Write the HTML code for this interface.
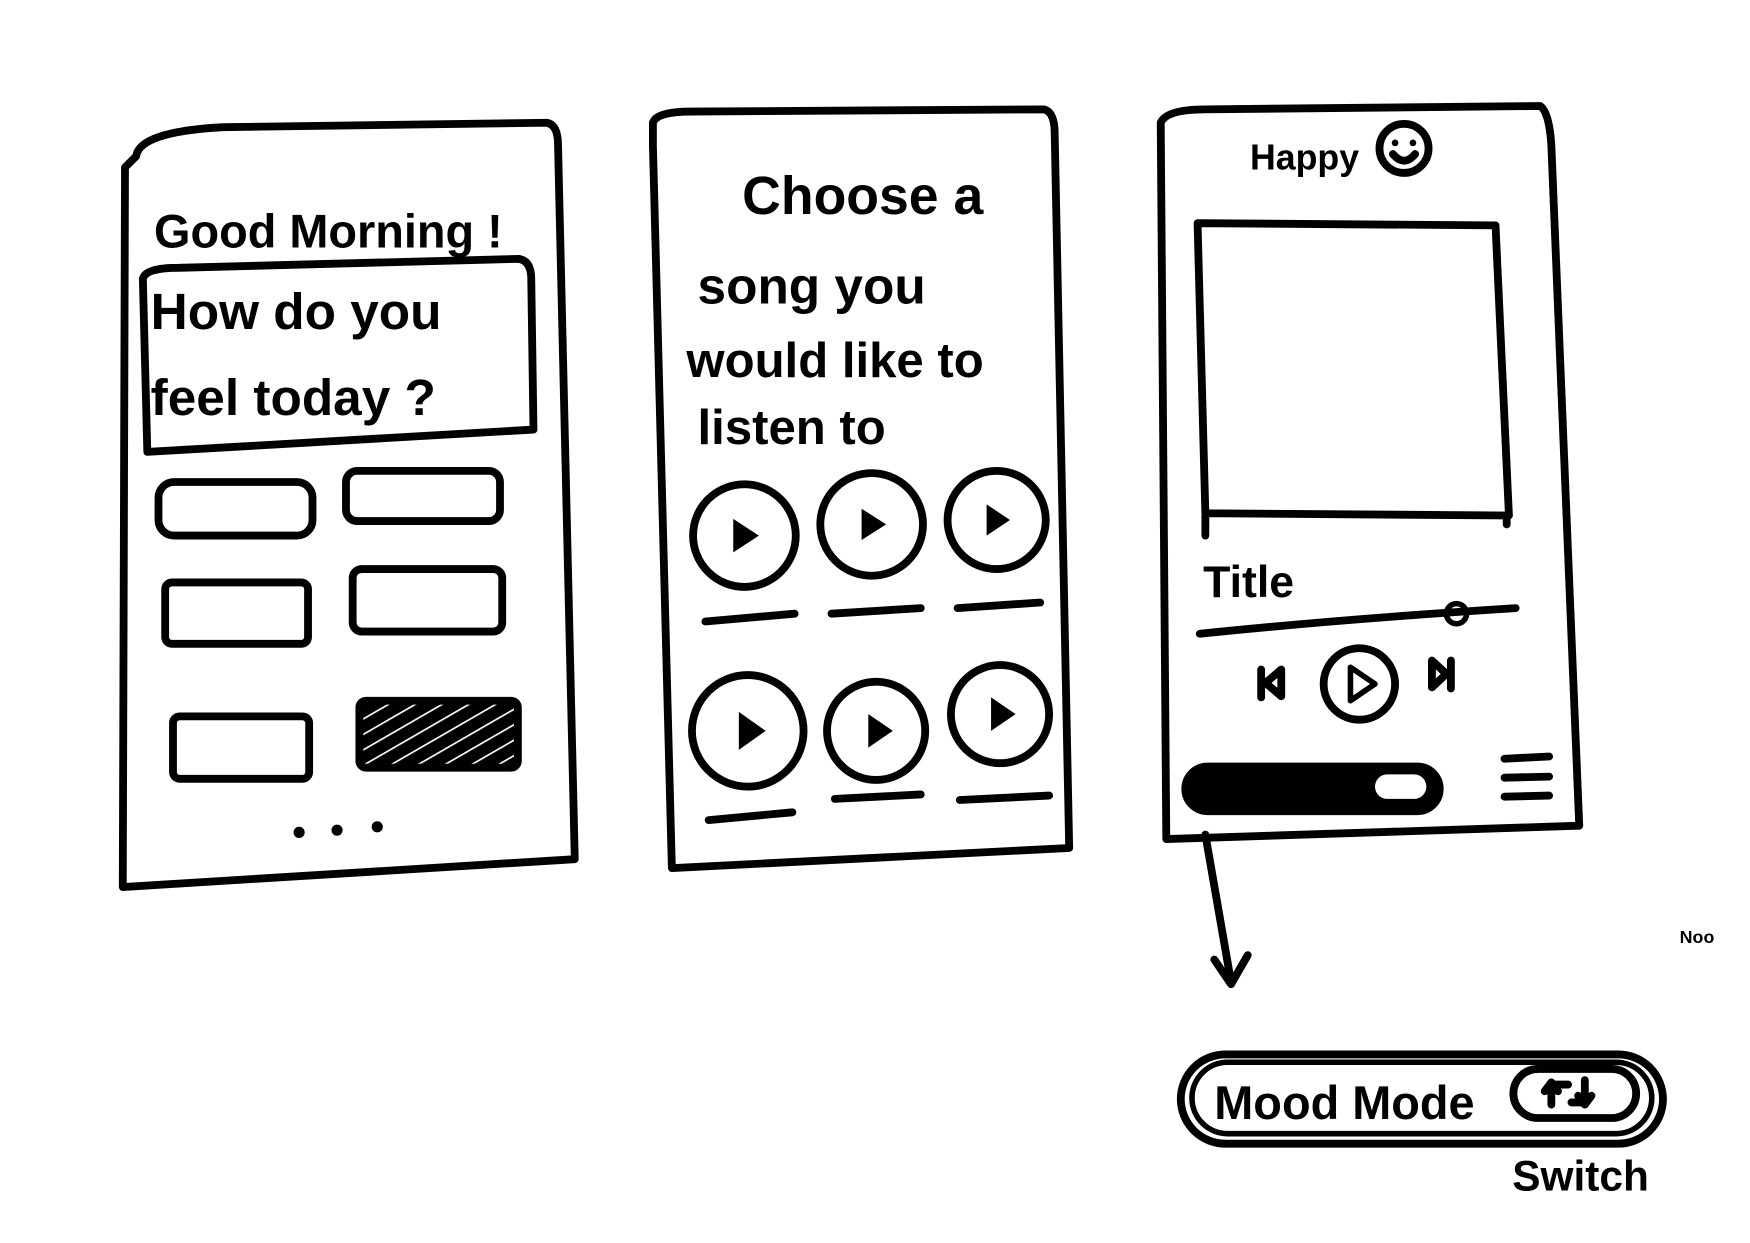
<!DOCTYPE html>
<html><head><meta charset="utf-8"><style>
html,body{margin:0;padding:0;background:#fff;width:1750px;height:1243px;overflow:hidden}
svg{display:block}
text{font-family:"Liberation Sans",sans-serif;font-weight:bold;fill:#000}
</style></head><body>
<svg width="1750" height="1243" viewBox="0 0 1568 1114" preserveAspectRatio="none">
<defs><pattern id="h" width="12" height="12" patternUnits="userSpaceOnUse" patternTransform="rotate(60)"><rect width="12" height="12" fill="#000"/><line x1="0" y1="0" x2="0" y2="12" stroke="#fff" stroke-width="3"/></pattern></defs>
<g fill="none" stroke="#000" stroke-width="7" stroke-linecap="round" stroke-linejoin="round">
<path d="M122 140 Q125 118 200 114 L490 110 Q500 112 500 130 L515 770 L110 795 L112 150 Z"/>
<path d="M128 250 Q130 240 160 240 L465 232 Q476 234 476 250 L478 385 L132 405 Z"/>
<rect x="142" y="432" width="138" height="48" rx="14"/>
<rect x="310" y="422" width="138" height="45" rx="10"/>
<rect x="148" y="522" width="128" height="55" rx="6"/>
<rect x="316" y="510" width="134" height="56" rx="8"/>
<rect x="155" y="642" width="122" height="56" rx="6"/>
<rect x="322" y="628" width="142" height="60" rx="6" fill="url(#h)"/>
<path d="M585 110 Q588 100 620 100 L935 98 Q945 100 945 120 L958 760 L602 778 L585 130 Z"/>
<circle cx="667" cy="480" r="46"/><circle cx="781" cy="470" r="46"/><circle cx="893" cy="466" r="44"/>
<path d="M632 557 L712 550 M745 550 L825 545 M858 545 L932 540"/>
<circle cx="670" cy="655" r="50"/><circle cx="785" cy="655" r="44"/><circle cx="896" cy="640" r="44"/>
<path d="M635 735 L710 728 M748 716 L825 712 M860 717 L940 713"/>
<path d="M1040 110 Q1045 98 1080 98 L1380 95 Q1388 100 1390 130 L1415 740 L1045 752 Z"/>
<circle cx="1258" cy="133" r="22"/>
<path d="M1248 138 Q1258 150 1268 138"/>
<path d="M1073 200 L1340 202 L1352 462 L1080 460 Z M1080 462 L1080 480 M1350 462 L1350 470"/>
<path d="M1075 568 Q1200 555 1358 545"/>
<circle cx="1305" cy="550" r="9" stroke-width="5"/>
<circle cx="1218" cy="613" r="32"/>
<path d="M1130 600 L1130 625 M1148 600 L1134 612 L1148 624 Z"/>
<path d="M1300 592 L1300 617 M1283 592 L1296 604 L1283 616 Z"/>
<rect x="1062" y="687" width="228" height="40" rx="20" fill="#000"/>
<rect x="1232" y="694" width="46" height="22" rx="11" fill="#fff" stroke="none"/>
<path d="M1348 680 L1388 678 M1348 697 L1388 696 M1348 714 L1388 713"/>
<path d="M1080 748 L1103 880 M1088 860 L1103 882 L1118 856"/>
<rect x="1058" y="945" width="432" height="80" rx="40"/>
<rect x="1068" y="952" width="412" height="64" rx="32" stroke-width="5"/>
<rect x="1356" y="958" width="110" height="44" rx="22"/>
<path d="M1390 990 L1390 972 L1405 972 M1384 978 L1390 970 L1396 978 M1420 968 L1420 988 L1408 988 M1414 982 L1420 990 L1426 982"/>
</g>
<g fill="#000">
<circle cx="268" cy="746" r="5"/><circle cx="302" cy="744" r="5"/><circle cx="338" cy="741" r="5"/>
<path d="M657 465 L680 480 L657 495 Z"/><path d="M772 456 L794 470 L772 484 Z"/><path d="M884 452 L905 466 L884 480 Z"/>
<path d="M662 638 L686 655 L662 672 Z"/><path d="M778 640 L800 655 L778 670 Z"/><path d="M888 625 L910 640 L888 655 Z"/>
<circle cx="1250" cy="128" r="3"/><circle cx="1266" cy="128" r="3"/>
</g>
<path d="M1210 598 L1232 613 L1210 628 Z" fill="none" stroke="#000" stroke-width="5" stroke-linejoin="round"/>
<text x="138" y="222" font-size="42">Good Morning !</text>
<text x="135" y="295" font-size="46">How do you</text>
<text x="135" y="372" font-size="46">feel today ?</text>
<text x="665" y="192" font-size="48">Choose a</text>
<text x="625" y="272" font-size="46">song you</text>
<text x="615" y="338" font-size="44">would like to</text>
<text x="625" y="398" font-size="44">listen to</text>
<text x="1120" y="152" font-size="32">Happy</text>
<text x="1078" y="535" font-size="40">Title</text>
<text x="1088" y="1003" font-size="42">Mood Mode</text>
<text x="1355" y="1067" font-size="38">Switch</text>
<text x="1505" y="845" font-size="16">Noo</text>
</svg>
</body></html>
